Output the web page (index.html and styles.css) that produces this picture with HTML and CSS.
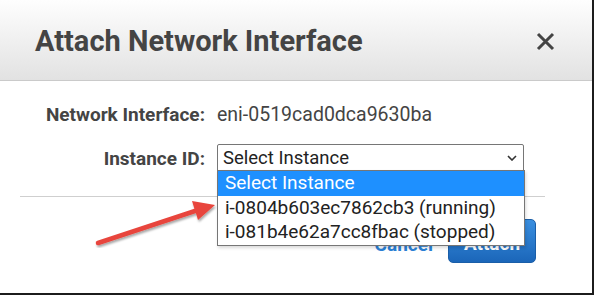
FILE: index.html
```html
<!DOCTYPE html>
<html lang="en">
<head>
    <meta charset="UTF-8">
    <meta name="viewport" content="width=device-width, initial-scale=1.0">
    <title>Attach Network Interface</title>
    <link rel="stylesheet" href="styles.css">
</head>
<body>
    <div class="dialog">
        <div class="dialog-header">
            <h2 class="dialog-title">Attach Network Interface</h2>
            <button class="close" aria-label="Close">
                <svg width="19" height="19" viewBox="0 0 19 19">
                    <path d="M2 2 L17 17 M17 2 L2 17" stroke="#444" stroke-width="3" fill="none"/>
                </svg>
            </button>
        </div>
        <div class="dialog-body">
            <div class="form-row">
                <span class="form-label">Network Interface:</span>
                <span class="form-value">eni-0519cad0dca9630ba</span>
            </div>
            <div class="form-row">
                <label class="form-label" for="instanceId">Instance ID:</label>
                <div class="select-wrap">
                    <div class="select" id="instanceId">
                        <span>Select Instance</span>
                        <svg width="10" height="6" viewBox="0 0 10 6">
                            <path d="M1 1 L5 5 L9 1" stroke="#333" stroke-width="1.6" fill="none"/>
                        </svg>
                    </div>
                    <ul class="options">
                        <li class="selected">Select Instance</li>
                        <li>i-0804b603ec7862cb3 (running)</li>
                        <li>i-081b4e62a7cc8fbac (stopped)</li>
                    </ul>
                </div>
            </div>
        </div>
        <div class="dialog-footer">
            <a href="#" class="cancel">Cancel</a>
            <button class="attach">Attach</button>
        </div>
        <svg class="arrow" width="130" height="50" viewBox="0 0 130 50">
            <defs>
                <filter id="shadow" x="-20%" y="-40%" width="140%" height="180%">
                    <feDropShadow dx="1" dy="2" stdDeviation="1.2" flood-color="#000" flood-opacity="0.35"/>
                </filter>
            </defs>
            <g filter="url(#shadow)">
                <path d="M8 45 L108 12" stroke="#e8453c" stroke-width="4.5" stroke-linecap="round"/>
                <path d="M125 7 L102 3 L108 22 Z" fill="#e8453c"/>
            </g>
        </svg>
    </div>
</body>
</html>
```

FILE: styles.css
```css
body {
    margin: 0;
    padding: 0;
    font-family: Roboto, "Liberation Sans", sans-serif;
    background-color: #fff;
}
.dialog {
    position: relative;
    width: 594px;
    height: 295px;
    box-sizing: border-box;
    border-right: 2px solid #1c1c1c;
    border-bottom: 2px solid #1c1c1c;
    background-color: #fff;
    overflow: hidden;
}
.dialog-header {
    height: 80px;
    display: flex;
    align-items: center;
    justify-content: space-between;
    padding: 0 37px 0 35px;
    background: linear-gradient(#fefefe, #e2e2e2);
    border-bottom: 1px solid #cacaca;
}
.dialog-title {
    margin: 0;
    padding-top: 2px;
    font-size: 29px;
    font-weight: 700;
    color: #444;
}
.close {
    border: none;
    background: none;
    padding: 0;
    width: 19px;
    height: 19px;
    margin-top: 3px;
    cursor: pointer;
}
.dialog-body {
    padding-top: 19px;
    display: flex;
    flex-direction: column;
    gap: 16px;
}
.form-row {
    display: flex;
    align-items: center;
    gap: 12px;
    height: 28px;
}
.form-label {
    width: 205px;
    text-align: right;
    font-size: 19px;
    font-weight: 700;
    color: #444;
}
.form-value {
    font-size: 19.5px;
    color: #444;
}
.select-wrap {
    position: relative;
    width: 307px;
}
.select {
    height: 28px;
    box-sizing: border-box;
    border: 1px solid #767676;
    border-radius: 2px;
    display: flex;
    align-items: center;
    justify-content: space-between;
    padding: 0 6px 0 5px;
    font-size: 18.5px;
    color: #222;
}
.options {
    position: absolute;
    top: 26px;
    left: 0;
    width: 308px;
    margin: 0;
    padding: 0;
    list-style: none;
    box-sizing: border-box;
    border: 1px solid #767676;
    background-color: #fff;
    box-shadow: 1px 2px 3px rgba(0, 0, 0, 0.15);
    z-index: 2;
}
.options li {
    height: 24.6px;
    line-height: 24.6px;
    padding-left: 7px;
    font-size: 19px;
    color: #222;
}
.options li.selected {
    background-color: #1e90ff;
    color: #fff;
}
.dialog-footer {
    margin: 24px 47px 0 20px;
    border-top: 1px solid #cfcfcf;
    padding: 22px 9px 0 0;
    display: flex;
    justify-content: flex-end;
    align-items: center;
    gap: 15px;
}
.cancel {
    font-size: 19px;
    font-weight: 700;
    color: #2a80d6;
    text-decoration: none;
    padding-top: 6px;
}
.attach {
    width: 88px;
    height: 44px;
    border: 1px solid #1a5ea8;
    border-radius: 5px;
    background: linear-gradient(#3a8fe0, #1b66b9);
    color: #fff;
    font-family: inherit;
    font-size: 19px;
    font-weight: 700;
    padding-top: 6px;
}
.arrow {
    position: absolute;
    left: 90px;
    top: 198px;
}
```
